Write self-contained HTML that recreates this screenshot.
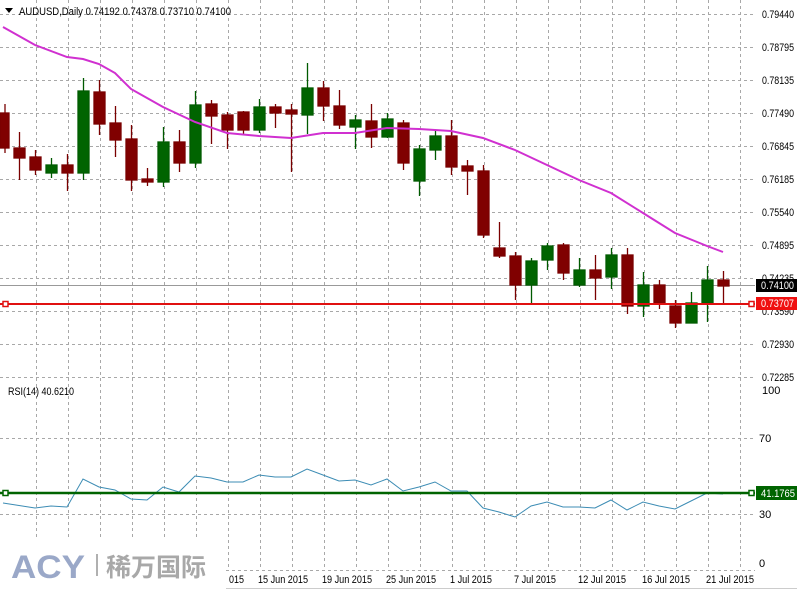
<!DOCTYPE html>
<html><head><meta charset="utf-8"><style>
body{margin:0;width:797px;height:589px;overflow:hidden;background:#fff;font-family:"Liberation Sans",sans-serif}
svg{display:block}
</style></head><body>
<svg width="797" height="589" viewBox="0 0 797 589" xmlns="http://www.w3.org/2000/svg" font-family="Liberation Sans, sans-serif">
<g stroke="#a8a8a8" stroke-width="1" stroke-dasharray="3,3" fill="none">
<path d="M36.5 0V570M68.5 0V570M100.5 0V570M132.5 0V570M164.5 0V570M196.5 0V570M228.5 0V570M260.5 0V570M292.5 0V570M324.5 0V570M356.5 0V570M388.5 0V570M420.5 0V570M452.5 0V570M484.5 0V570M516.5 0V570M548.5 0V570M580.5 0V570M612.5 0V570M644.5 0V570M676.5 0V570M708.5 0V570M740.5 0V570"/>
<path d="M0 14.5H755M0 47.5H755M0 80.5H755M0 113.5H755M0 146.5H755M0 179.5H755M0 212.5H755M0 245.5H755M0 278.5H755M0 311.5H755M0 344.5H755M0 377.5H755M0 438.5H755M0 514.5H755"/>
</g>
<line x1="0" y1="285.5" x2="755" y2="285.5" stroke="#999" stroke-width="1"/>
<g stroke-width="1.3">
<g stroke="#7a0000" fill="#800000">
<line x1="5" y1="104" x2="5" y2="153"/><rect x="0" y="113" width="9" height="35"/>
<line x1="19.5" y1="132" x2="19.5" y2="180"/><rect x="14" y="148" width="11" height="10"/>
<line x1="35.5" y1="150" x2="35.5" y2="175"/><rect x="30" y="157" width="11" height="13"/>
<line x1="67.5" y1="154" x2="67.5" y2="191"/><rect x="62" y="165" width="11" height="8"/>
<line x1="99.5" y1="80" x2="99.5" y2="135"/><rect x="94" y="92" width="11" height="32"/>
<line x1="115.5" y1="106" x2="115.5" y2="157"/><rect x="110" y="123" width="11" height="17"/>
<line x1="131.5" y1="125" x2="131.5" y2="191"/><rect x="126" y="139" width="11" height="41"/>
<line x1="147.5" y1="168" x2="147.5" y2="186"/><rect x="142" y="179" width="11" height="3"/>
<line x1="179.5" y1="130" x2="179.5" y2="172"/><rect x="174" y="142" width="11" height="21"/>
<line x1="211.5" y1="100" x2="211.5" y2="144"/><rect x="206" y="104" width="11" height="12"/>
<line x1="227.5" y1="112" x2="227.5" y2="149"/><rect x="222" y="115" width="11" height="15"/>
<line x1="243.5" y1="111" x2="243.5" y2="135"/><rect x="238" y="112" width="11" height="18"/>
<line x1="275.5" y1="104" x2="275.5" y2="128"/><rect x="270" y="107" width="11" height="6"/>
<line x1="291.5" y1="104" x2="291.5" y2="172"/><rect x="286" y="110" width="11" height="4"/>
<line x1="323.5" y1="81" x2="323.5" y2="121"/><rect x="318" y="88" width="11" height="18"/>
<line x1="339.5" y1="90" x2="339.5" y2="129"/><rect x="334" y="106" width="11" height="19"/>
<line x1="371.5" y1="104" x2="371.5" y2="148"/><rect x="366" y="121" width="11" height="16"/>
<line x1="403.5" y1="120" x2="403.5" y2="170"/><rect x="398" y="123" width="11" height="40"/>
<line x1="451.5" y1="120" x2="451.5" y2="175"/><rect x="446" y="136" width="11" height="31"/>
<line x1="467.5" y1="160" x2="467.5" y2="195"/><rect x="462" y="166" width="11" height="5"/>
<line x1="483.5" y1="165" x2="483.5" y2="238"/><rect x="478" y="171" width="11" height="64"/>
<line x1="499.5" y1="222" x2="499.5" y2="258"/><rect x="494" y="248" width="11" height="8"/>
<line x1="515.5" y1="252" x2="515.5" y2="300"/><rect x="510" y="256" width="11" height="29"/>
<line x1="563.5" y1="243" x2="563.5" y2="280"/><rect x="558" y="245" width="11" height="28"/>
<line x1="595.5" y1="255" x2="595.5" y2="300"/><rect x="590" y="270" width="11" height="8"/>
<line x1="627.5" y1="248" x2="627.5" y2="314"/><rect x="622" y="255" width="11" height="51"/>
<line x1="659.5" y1="280" x2="659.5" y2="309"/><rect x="654" y="285" width="11" height="19"/>
<line x1="675.5" y1="300" x2="675.5" y2="328"/><rect x="670" y="306" width="11" height="17"/>
<line x1="723.5" y1="271" x2="723.5" y2="304"/><rect x="718" y="280" width="11" height="6"/>
</g>
<g stroke="#005a00" fill="#006400">
<line x1="51.5" y1="158" x2="51.5" y2="178"/><rect x="46" y="165" width="11" height="8"/>
<line x1="83.5" y1="78" x2="83.5" y2="180"/><rect x="78" y="91" width="11" height="82"/>
<line x1="163.5" y1="127" x2="163.5" y2="187"/><rect x="158" y="142" width="11" height="40"/>
<line x1="195.5" y1="91" x2="195.5" y2="168"/><rect x="190" y="105" width="11" height="58"/>
<line x1="259.5" y1="99" x2="259.5" y2="133"/><rect x="254" y="107" width="11" height="23"/>
<line x1="307.5" y1="63" x2="307.5" y2="134"/><rect x="302" y="88" width="11" height="27"/>
<line x1="355.5" y1="115" x2="355.5" y2="149"/><rect x="350" y="120" width="11" height="7"/>
<line x1="387.5" y1="113" x2="387.5" y2="138"/><rect x="382" y="119" width="11" height="18"/>
<line x1="419.5" y1="145" x2="419.5" y2="196"/><rect x="414" y="149" width="11" height="32"/>
<line x1="435.5" y1="130" x2="435.5" y2="160"/><rect x="430" y="136" width="11" height="14"/>
<line x1="531.5" y1="258" x2="531.5" y2="303"/><rect x="526" y="261" width="11" height="24"/>
<line x1="547.5" y1="243" x2="547.5" y2="270"/><rect x="542" y="246" width="11" height="14"/>
<line x1="579.5" y1="258" x2="579.5" y2="287"/><rect x="574" y="270" width="11" height="15"/>
<line x1="611.5" y1="248" x2="611.5" y2="289"/><rect x="606" y="255" width="11" height="22"/>
<line x1="643.5" y1="272" x2="643.5" y2="317"/><rect x="638" y="285" width="11" height="21"/>
<line x1="691.5" y1="292" x2="691.5" y2="323"/><rect x="686" y="303" width="11" height="20"/>
<line x1="707.5" y1="266" x2="707.5" y2="322"/><rect x="702" y="280" width="11" height="23"/>
</g>
</g>
<polyline fill="none" stroke="#d030d0" stroke-width="2" points="3,27 35,45 67,57 83,59 99,64 115,73 131,89 163,107 195,122 227,133 259,136 291,138 323,133 355,133 387,128 419,129 451,131 483,138 515,150 547,165 579,180 611,193 643,213 675,233 707,246 723,252"/>
<line x1="0" y1="304" x2="755" y2="304" stroke="#e01010" stroke-width="2"/>
<rect x="3" y="301.5" width="5" height="5" fill="#fff" stroke="#e01010" stroke-width="1.5"/>
<rect x="749" y="301.5" width="5" height="5" fill="#fff" stroke="#e01010" stroke-width="1.5"/>
<polygon points="5,8 13,8 9,13" fill="#000"/>
<text x="19" y="15" font-size="11" fill="#000" textLength="212" lengthAdjust="spacingAndGlyphs">AUDUSD,Daily  0.74192 0.74378 0.73710 0.74100</text>
<g font-size="11" fill="#000">
<text x="762" y="18" textLength="32" lengthAdjust="spacingAndGlyphs">0.79440</text><text x="762" y="51" textLength="32" lengthAdjust="spacingAndGlyphs">0.78795</text><text x="762" y="84" textLength="32" lengthAdjust="spacingAndGlyphs">0.78135</text>
<text x="762" y="117" textLength="32" lengthAdjust="spacingAndGlyphs">0.77490</text><text x="762" y="150" textLength="32" lengthAdjust="spacingAndGlyphs">0.76845</text><text x="762" y="183" textLength="32" lengthAdjust="spacingAndGlyphs">0.76185</text>
<text x="762" y="216" textLength="32" lengthAdjust="spacingAndGlyphs">0.75540</text><text x="762" y="249" textLength="32" lengthAdjust="spacingAndGlyphs">0.74895</text><text x="762" y="282" textLength="32" lengthAdjust="spacingAndGlyphs">0.74235</text>
<text x="762" y="315" textLength="32" lengthAdjust="spacingAndGlyphs">0.73590</text><text x="762" y="348" textLength="32" lengthAdjust="spacingAndGlyphs">0.72930</text><text x="762" y="381" textLength="32" lengthAdjust="spacingAndGlyphs">0.72285</text>
<text x="762" y="394">100</text><text x="759" y="442">70</text><text x="759" y="518">30</text><text x="759" y="567">0</text>
</g>
<rect x="756" y="279" width="41" height="13" fill="#000"/>
<text x="761" y="289" font-size="11" fill="#fff" textLength="33" lengthAdjust="spacingAndGlyphs">0.74100</text>
<rect x="756" y="297" width="41" height="13" fill="#f01010"/>
<text x="761" y="307" font-size="11" fill="#fff" textLength="33" lengthAdjust="spacingAndGlyphs">0.73707</text>
<text x="8" y="395" font-size="11" fill="#000" textLength="66" lengthAdjust="spacingAndGlyphs">RSI(14) 40.6210</text>
<polyline fill="none" stroke="#3c8cb4" stroke-width="1" points="3,503 35,508 51,506 67,507 83,479 99,487 115,490 131,499 147,500 163,487 179,492 195,476 211,478 227,482 243,482 259,475 275,477 291,477 307,469 323,475 339,481 355,480 371,485 387,479 403,491 419,487 435,482 451,491 467,491 483,508 499,512 515,517 531,506 547,502 563,507 579,507 595,508 611,500 627,510 643,502 659,506 675,509 691,501 707,493 723,494"/>
<line x1="0" y1="493" x2="755" y2="493" stroke="#006400" stroke-width="2.5"/>
<rect x="3" y="490.5" width="5" height="5" fill="#fff" stroke="#006400" stroke-width="1.5"/>
<rect x="749" y="490.5" width="5" height="5" fill="#fff" stroke="#006400" stroke-width="1.5"/>
<rect x="756" y="486" width="41" height="14" fill="#006400"/>
<text x="761" y="497" font-size="11" fill="#fff" textLength="34" lengthAdjust="spacingAndGlyphs">41.1765</text>
<rect x="0" y="538" width="226" height="51" fill="#fff"/>
<line x1="226" y1="570.5" x2="755" y2="570.5" stroke="#a8a8a8" stroke-dasharray="3,3"/>
<line x1="226" y1="588.5" x2="797" y2="588.5" stroke="#ccc"/>
<g font-size="11" fill="#000">
<text x="229" y="583" textLength="15" lengthAdjust="spacingAndGlyphs">015</text>
<text x="258" y="583" textLength="50" lengthAdjust="spacingAndGlyphs">15 Jun 2015</text>
<text x="322" y="583" textLength="50" lengthAdjust="spacingAndGlyphs">19 Jun 2015</text>
<text x="386" y="583" textLength="50" lengthAdjust="spacingAndGlyphs">25 Jun 2015</text>
<text x="450" y="583" textLength="42" lengthAdjust="spacingAndGlyphs">1 Jul 2015</text>
<text x="514" y="583" textLength="42" lengthAdjust="spacingAndGlyphs">7 Jul 2015</text>
<text x="578" y="583" textLength="48" lengthAdjust="spacingAndGlyphs">12 Jul 2015</text>
<text x="642" y="583" textLength="48" lengthAdjust="spacingAndGlyphs">16 Jul 2015</text>
<text x="706" y="583" textLength="48" lengthAdjust="spacingAndGlyphs">21 Jul 2015</text>
</g>
<text x="11" y="578" font-size="32" font-weight="bold" fill="#9aa8c8" textLength="74" lengthAdjust="spacingAndGlyphs">ACY</text>
<rect x="96" y="554" width="2" height="22" fill="#b0b0b0"/>
<text x="106" y="576" font-size="25" font-weight="bold" fill="#a8a8a8" font-family="Noto Sans CJK SC, sans-serif">稀万国际</text>
</svg>
</body></html>
